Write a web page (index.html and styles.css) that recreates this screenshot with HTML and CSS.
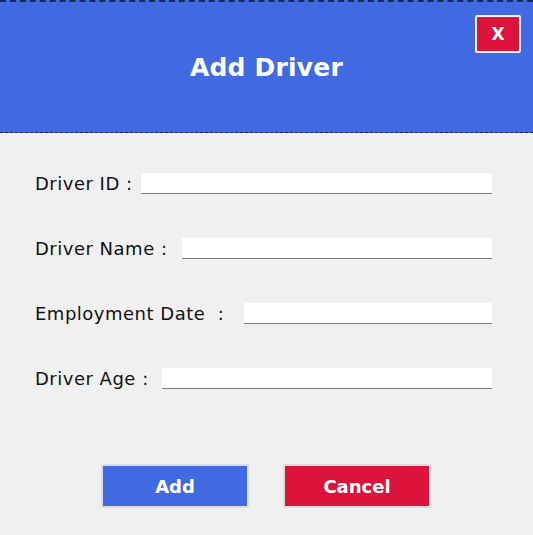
FILE: index.html
```html
<!DOCTYPE html>
<html>
<head>
<meta charset="utf-8">
<link rel="stylesheet" href="styles.css">
</head>
<body>
<div class="dialog">
  <header class="header">
    <h1 class="title">Add Driver</h1>
    <button class="close">X</button>
  </header>
  <main class="form">
    <div class="row"><label class="label label-id">Driver ID :</label><div class="field"></div></div>
    <div class="row"><label class="label label-name">Driver Name :</label><div class="field"></div></div>
    <div class="row"><label class="label label-date">Employment Date &nbsp;:</label><div class="field"></div></div>
    <div class="row"><label class="label label-age">Driver Age :</label><div class="field"></div></div>
  </main>
  <footer class="actions">
    <button class="btn btn-add">Add</button>
    <button class="btn btn-cancel">Cancel</button>
  </footer>
</div>
</body>
</html>
```
FILE: styles.css
```css
html, body {
  margin: 0;
  padding: 0;
  background: #f0f0f0;
}
.dialog {
  width: 533px;
  height: 535px;
  font-family: "DejaVu Sans", sans-serif;
  position: relative;
  overflow: hidden;
}
.header {
  height: 130px;
  background: #4169e1;
  border-top: 2px dashed #1b2a55;
  border-bottom: 1px dashed #1b2a55;
  position: relative;
  display: flex;
  align-items: center;
  justify-content: center;
}
.title {
  margin: 0;
  color: #fff;
  font-size: 25px;
  font-weight: bold;
  letter-spacing: 0.2px;
}
.close {
  position: absolute;
  top: 13px;
  left: 475px;
  width: 46px;
  height: 38px;
  background: #dc143c;
  border: 2px solid #f2f2f2;
  border-radius: 2px;
  color: #fff;
  font-family: "DejaVu Sans", sans-serif;
  font-weight: bold;
  font-size: 17px;
  padding: 0;
}
.form {
  padding: 40px 41px 0 35px;
  display: flex;
  flex-direction: column;
  gap: 44px;
}
.row {
  display: flex;
  align-items: center;
  height: 21px;
}
.label {
  font-size: 18px;
  color: #111;
  white-space: pre;
  letter-spacing: 0.5px;
}
.label-id { width: 106px; }
.label-name { width: 147px; }
.label-date { width: 209px; }
.label-age { width: 127px; }
.field {
  flex: 1;
  height: 20px;
  background: #fff;
  border-bottom: 1px solid #7a7a7a;
}
.actions {
  display: flex;
  gap: 34px;
  padding: 75px 0 0 101px;
}
.btn {
  width: 148px;
  height: 44px;
  border: 2px solid #dcdcdc;
  border-radius: 2px;
  color: #fff;
  font-family: "DejaVu Sans", sans-serif;
  font-weight: bold;
  font-size: 18px;
  padding: 0;
}
.btn-add { background: #4169e1; }
.btn-cancel { background: #dc143c; }
```
